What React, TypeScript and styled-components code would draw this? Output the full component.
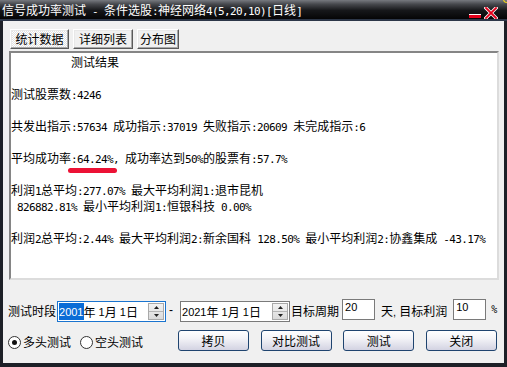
import React from "react";
import styled, { createGlobalStyle, css } from "styled-components";

const HAN = `"Noto Sans CJK SC", sans-serif`;

const Global = createGlobalStyle`
  html, body { margin: 0; padding: 0; background: #f0f0f0; }
  body { font-family: ${HAN}; font-size: 12px; color: #000; }
  * { box-sizing: border-box; }
`;

/* ---------- mixed-script text ---------- */
const Han = styled.span`
  font-family: ${HAN};
  font-size: 12px;
`;

const Asc = styled.span<{ $ui?: boolean }>`
  ${(p) =>
    p.$ui
      ? css`
          font-family: "Liberation Sans", Arial, sans-serif;
          font-size: 11px;
        `
      : css`
          font-family: "DejaVu Sans Mono", monospace;
          font-size: 11px;
          letter-spacing: -0.62px;
        `}
`;

const splitRuns = (s: string) => s.match(/[\x00-\x7f]+|[^\x00-\x7f]+/g) ?? [];

const Mixed = ({ text, ui }: { text: string; ui?: boolean }) => (
  <>
    {splitRuns(text).map((r, i) =>
      /^[\x00-\x7f]/.test(r) ? (
        <Asc key={i} $ui={ui}>
          {r}
        </Asc>
      ) : (
        <Han key={i}>{r}</Han>
      )
    )}
  </>
);

/* ---------- window chrome ---------- */
const Window = styled.div`
  width: 507px;
  height: 367px;
  display: flex;
  flex-direction: column;
  overflow: hidden;
  background: #1d2027;
`;

const TitleBar = styled.div`
  position: relative;
  flex: none;
  height: 21px;
  padding: 3px 0 0 2px;
  border-bottom: 2px solid #2c3648;
  background: linear-gradient(to bottom, #76797f 0%, #46484d 22%, #16171a 55%, #050506 100%);
  display: flex;
  align-items: center;
  color: #fff;
  white-space: pre;
`;

const Title = styled.div`
  line-height: 16px;
`;

const Captions = styled.div`
  margin-left: auto;
  margin-right: 9px;
  align-self: flex-end;
  display: flex;
  align-items: flex-end;
  gap: 2px;
`;

const CornerDot = styled.span`
  position: absolute;
  right: 0;
  top: -2px;
  width: 4px;
  height: 5px;
  border-bottom-left-radius: 4px;
  border-left: 1px solid #f2d21a;
  border-bottom: 1px solid #f2d21a;
`;

const Body = styled.div`
  flex: 1;
  margin: 0 3px 4px 3px;
  background: #f0f0f0;
  padding: 8px 5px 12px 5px;
  display: flex;
  flex-direction: column;
`;

/* ---------- tabs ---------- */
const Tabs = styled.div`
  display: flex;
  gap: 4px;
  margin-left: 2px;
  height: 20px;
`;

const Tab = styled.div<{ $w: number; $active?: boolean }>`
  width: ${(p) => p.$w}px;
  height: 20px;
  display: flex;
  align-items: center;
  justify-content: center;
  border: 1px solid;
  border-color: #ffffff #5a5a5a #5a5a5a #ffffff;
  box-shadow: inset -1px -1px 0 #a8a8a8, inset 1px 1px 0 #e8e8e8;
  font-size: 12px;
  line-height: 14px;
  ${(p) =>
    p.$active
      ? css`
          background: repeating-conic-gradient(#ffffff 0 25%, #e2e2e2 0 50%) 0 0 / 2px 2px;
        `
      : css`
          background: #f0f0f0;
        `}
`;

/* ---------- report ---------- */
const Report = styled.div`
  position: relative;
  margin: 2px 0 0 1px;
  height: 229px;
  border: 2px solid;
  border-color: #858585 #dcdcdc #dcdcdc #858585;
  background: #ffffff;
  padding-top: 1px;
  white-space: pre;
  overflow: hidden;
`;

const Line = styled.div`
  height: 16px;
  line-height: 16px;
`;

const RedMark = styled.span`
  position: absolute;
  left: 57px;
  top: 115px;
  width: 49px;
  height: 5px;
  border-radius: 3px;
  background: #ec1235;
`;

/* ---------- controls ---------- */
const ParamRow = styled.div`
  display: flex;
  align-items: flex-start;
  height: 23px;
  margin-top: 19px;
`;

const ActionRow = styled.div`
  display: flex;
  align-items: center;
  height: 21px;
  margin-top: 8px;
`;

const Label = styled.span<{ $ml?: number }>`
  margin-left: ${(p) => p.$ml ?? 0}px;
  line-height: 23px;
  font-size: 12px;
  white-space: pre;
`;

const DateBox = styled.div<{ $w: number; $ml?: number; $focus?: boolean }>`
  width: ${(p) => p.$w}px;
  height: 21px;
  margin-top: 2px;
  margin-left: ${(p) => p.$ml ?? 0}px;
  border: 1px solid ${(p) => (p.$focus ? "#1a74cf" : "#7a7a7a")};
  background: #fff;
  display: flex;
  align-items: center;
  padding-left: 1px;
  white-space: pre;
  line-height: 14px;
`;

const Selected = styled.span`
  background: #0a6cd6;
  color: #fff;
  padding: 1px 0;
`;

const Spinner = styled.div`
  margin-left: auto;
  margin-right: 1px;
  width: 16px;
  height: 17px;
  display: flex;
  flex-direction: column;
  border: 1px solid #a9a9a9;
  background: linear-gradient(#f3f3f3, #dadada);
`;

const SpinHalf = styled.div<{ $top?: boolean }>`
  flex: 1;
  display: flex;
  align-items: center;
  justify-content: center;
  ${(p) => (p.$top ? "border-bottom: 1px solid #b4b4b4;" : "")}
`;

const Field = styled.div<{ $ml?: number }>`
  width: 33px;
  height: 21px;
  margin-left: ${(p) => p.$ml ?? 0}px;
  border: 1px solid #7a7a7a;
  background: #fff;
  padding: 1px 0 0 2px;
  font-family: "Liberation Sans", Arial, sans-serif;
  font-size: 11px;
  line-height: 12px;
`;

const Dash = styled.span`
  margin: 0 7px 0 3px;
  line-height: 21px;
  font-family: "Liberation Sans", Arial, sans-serif;
  font-size: 12px;
  margin-top: 1px;
`;

const Percent = styled.span<{ $ml?: number }>`
  margin-left: ${(p) => p.$ml ?? 0}px;
  line-height: 21px;
  font-family: "DejaVu Sans Mono", monospace;
  font-size: 10px;
`;

const Radio = styled.div<{ $ml?: number }>`
  display: flex;
  align-items: center;
  margin-left: ${(p) => p.$ml ?? 0}px;
  margin-top: 3px;
  gap: 2px;
`;

const Circle = styled.span<{ $on?: boolean }>`
  position: relative;
  width: 13px;
  height: 13px;
  border-radius: 50%;
  border: 1px solid #333;
  background: #fff;
  ${(p) =>
    p.$on &&
    css`
      &::after {
        content: "";
        position: absolute;
        left: 3px;
        top: 3px;
        width: 5px;
        height: 5px;
        border-radius: 50%;
        background: #111;
      }
    `}
`;

const RadioText = styled.span`
  font-size: 12px;
  line-height: 14px;
`;

const Buttons = styled.div`
  margin-left: 35px;
  display: flex;
  gap: 11.6px;
`;

const Button = styled.div`
  width: 71px;
  height: 21px;
  border: 1px solid #1f446f;
  border-radius: 3px;
  background: linear-gradient(to bottom, #ffffff 0%, #f3f3f7 40%, #d3d3e2 100%);
  display: flex;
  align-items: center;
  justify-content: center;
  font-size: 12px;
  line-height: 14px;
`;

/* ---------- icons ---------- */
const MinIcon = () => (
  <svg width="14" height="12" viewBox="0 0 14 12">
    <rect x="1" y="7" width="12" height="1" fill="#ffffff" />
    <rect x="1" y="8" width="12" height="3" fill="#e3001b" />
  </svg>
);

const CloseIcon = () => (
  <svg width="14" height="12" viewBox="0 0 14 12">
    <path d="M2 1 L12 11 M12 1 L2 11" stroke="#ffffff" strokeWidth="3.4" strokeLinecap="square" />
    <path d="M2 1 L12 11 M12 1 L2 11" stroke="#e3001b" strokeWidth="1.8" strokeLinecap="square" />
  </svg>
);

const Arrow = ({ up }: { up?: boolean }) => (
  <svg width="5" height="3" viewBox="0 0 5 3">
    <path d={up ? "M0 3 L2.5 0 L5 3 Z" : "M0 0 L5 0 L2.5 3 Z"} fill="#222" />
  </svg>
);

const Spin = () => (
  <Spinner>
    <SpinHalf $top>
      <Arrow up />
    </SpinHalf>
    <SpinHalf>
      <Arrow />
    </SpinHalf>
  </Spinner>
);

/* ---------- data ---------- */
const reportLines = [
  "          测试结果",
  "",
  "测试股票数:4246",
  "",
  "共发出指示:57634 成功指示:37019 失败指示:20609 未完成指示:6",
  "",
  "平均成功率:64.24%, 成功率达到50%的股票有:57.7%",
  "",
  "利润1总平均:277.07% 最大平均利润1:退市昆机",
  " 826882.81% 最小平均利润1:恒银科技 0.00%",
  "",
  "利润2总平均:2.44% 最大平均利润2:新余国科 128.50% 最小平均利润2:协鑫集成 -43.17%",
];

const tabs = [
  { label: "统计数据", w: 59, active: true },
  { label: "详细列表", w: 60 },
  { label: "分布图", w: 42 },
];

const buttons = ["拷贝", "对比测试", "测试", "关闭"];

export default function App() {
  return (
    <>
      <Global />
      <Window>
        <TitleBar>
          <Title>
            <Mixed text="信号成功率测试 - 条件选股:神经网络4(5,20,10)[日线]" />
          </Title>
          <Captions>
            <MinIcon />
            <CloseIcon />
          </Captions>
          <CornerDot />
        </TitleBar>
        <Body>
          <Tabs>
            {tabs.map((t) => (
              <Tab key={t.label} $w={t.w} $active={t.active}>
                {t.label}
              </Tab>
            ))}
          </Tabs>
          <Report>
            {reportLines.map((l, i) => (
              <Line key={i}>
                <Mixed text={l} />
              </Line>
            ))}
            <RedMark />
          </Report>
          <ParamRow>
            <Label>测试时段</Label>
            <DateBox $w={109} $ml={1} $focus>
              <Selected>
                <Asc $ui>2001</Asc>
              </Selected>
              <Mixed ui text="年 1月 1日" />
              <Spin />
            </DateBox>
            <Dash>-</Dash>
            <DateBox $w={110}>
              <Mixed ui text="2021年 1月 1日" />
              <Spin />
            </DateBox>
            <Label $ml={1}>目标周期</Label>
            <Field $ml={3}>20</Field>
            <Label $ml={6}>
              <Mixed ui text="天, 目标利润" />
            </Label>
            <Field $ml={6}>10</Field>
            <Percent $ml={5}>%</Percent>
          </ParamRow>
          <ActionRow>
            <Radio>
              <Circle $on />
              <RadioText>多头测试</RadioText>
            </Radio>
            <Radio $ml={9}>
              <Circle />
              <RadioText>空头测试</RadioText>
            </Radio>
            <Buttons>
              {buttons.map((b) => (
                <Button key={b}>{b}</Button>
              ))}
            </Buttons>
          </ActionRow>
        </Body>
      </Window>
    </>
  );
}
